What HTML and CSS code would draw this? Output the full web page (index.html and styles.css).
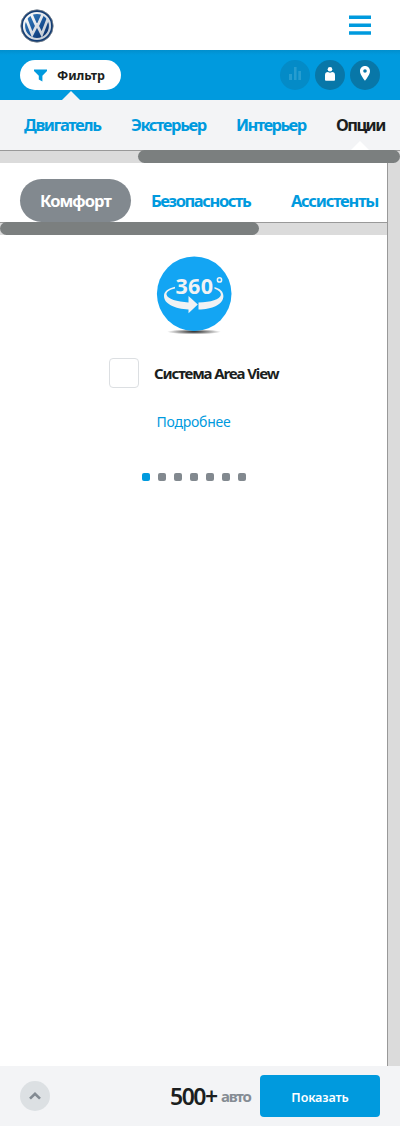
FILE: index.html
```html
<!DOCTYPE html>
<html lang="ru">
<head>
<meta charset="utf-8">
<title>Volkswagen</title>
<link rel="stylesheet" href="styles.css">
</head>
<body>
<header class="header">
  <svg class="logo" viewBox="0 0 34 34">
    <defs>
      <linearGradient id="blue" x1="0" y1="0" x2="1" y2="1"><stop offset="0" stop-color="#3a85c3"/><stop offset=".5" stop-color="#1b579b"/><stop offset="1" stop-color="#06245b"/></linearGradient>
      <linearGradient id="metal" x1="0" y1="0" x2="1" y2="1"><stop offset="0" stop-color="#fff"/><stop offset="1" stop-color="#bdc6d0"/></linearGradient>
    </defs>
    <circle cx="17" cy="17" r="16.2" fill="#123d75" stroke="#7b8188" stroke-width=".8"/>
    <circle cx="17" cy="17" r="13" fill="url(#blue)" stroke="url(#metal)" stroke-width="2.2"/>
    <path d="M11.4 5.6 15.7 15.4H18.3L22.6 5.6M6 9.6 12.2 25.5 16.1 17.6H17.9L21.8 25.5 28 9.6" fill="none" stroke="url(#metal)" stroke-width="2.7"/>
  </svg>
  <svg class="burger" viewBox="0 0 24 20"><path d="M1 2.3H23M1 10.3H23M1 18H23" stroke="#009ade" stroke-width="3.4"/></svg>
</header>
<div class="toolbar">
  <div class="filter">
    <svg class="funnel" viewBox="0 0 13 13"><path d="M0 .5H13V2L8.4 6.8V12.4L4.8 10.6V6.8L0 2Z" fill="#009ade"/></svg>
    <span class="filter-label">Фильтр</span>
  </div>
  <div class="actions">
    <svg class="round muted" viewBox="0 0 30 30"><path d="M9 14H12V20H9ZM14 7H16.6V20H14ZM18.3 11H21V20H18.3Z" fill="#269dd0"/></svg>
    <svg class="round" viewBox="0 0 30 30"><circle cx="15" cy="9.2" r="2.3" fill="#fff"/><path d="M10 20V15.2Q10 12 13 12Q15 13.6 17 12Q20 12 20 15.2V20Q20 20.8 19 20.8H11Q10 20.8 10 20Z" fill="#fff"/></svg>
    <svg class="round" viewBox="0 0 30 30"><path fill-rule="evenodd" d="M15 6.1C12 6.1 10 8.3 10 11.2C10 14.7 15 20.8 15 20.8S20 14.7 20 11.2C20 8.3 18 6.1 15 6.1ZM15 9.2A1.8 1.8 0 1 1 15 12.8A1.8 1.8 0 1 1 15 9.2Z" fill="#fff"/></svg>
  </div>
</div>
<nav class="tabs">
  <span class="tab engine">Двигатель</span>
  <span class="tab exterior">Экстерьер</span>
  <span class="tab interior">Интерьер</span>
  <span class="tab options">Опции</span>
</nav>
<div class="scrollbar main-scroll"><div class="thumb"></div></div>
<main class="content">
  <section class="panel">
    <nav class="groups">
      <span class="group comfort"><span>Комфорт</span></span>
      <span class="group safety">Безопасность</span>
      <span class="group assist">Ассистенты</span>
    </nav>
    <div class="scrollbar group-scroll"><div class="thumb"></div></div>
    <div class="option">
      <svg class="view360" viewBox="0 0 80 84">
        <defs><radialGradient id="shadow"><stop offset="0" stop-color="#222"/><stop offset="1" stop-color="#222" stop-opacity="0"/></radialGradient></defs>
        <ellipse cx="40" cy="78.8" rx="27" ry="2.6" fill="url(#shadow)"/>
        <circle cx="40.2" cy="40.8" r="37.3" fill="#13a5f3"/>
        <path d="M21 33.8C14 35.3 10 38.5 10 43C10 51 21 55.8 34.5 56.5V60.3L43.8 51.5L34.5 43V49.5C23 48.6 13.5 46.3 12.5 41.6C12.2 38.8 15.5 36.8 21 35.5ZM60.5 34C66 35.5 69.4 38.5 69.4 43C69.4 51.6 58 56.5 44.5 56.5V49.5C57 49.2 65.9 46.3 66.9 42C67.2 39 64 37 60.5 35.7Z" fill="#f1f2f3"/>
        <text class="degrees" x="21.5" y="41.3" textLength="37.5">360</text>
        <circle cx="65.5" cy="26.9" r="2.1" fill="none" stroke="#f1f2f3" stroke-width="1.5"/>
      </svg>
      <div class="choice"><span class="checkbox"></span><span class="option-name">Система Area View</span></div>
      <div class="more">Подробнее</div>
      <div class="dots"><i class="dot active"></i><i class="dot"></i><i class="dot"></i><i class="dot"></i><i class="dot"></i><i class="dot"></i><i class="dot"></i></div>
    </div>
  </section>
  <div class="side-scroll"></div>
</main>
<footer class="footer">
  <svg class="up" viewBox="0 0 30 30"><circle cx="15" cy="15" r="15" fill="#dce0e3"/><path d="M10 17.6 15 12.8 20 17.6" fill="none" stroke="#828a92" stroke-width="2.7"/></svg>
  <div class="total"><span class="count">500+</span><span class="cars">авто</span></div>
  <div class="show"><span>Показать</span></div>
</footer>
</body>
</html>
```
FILE: styles.css
```css
* { box-sizing: border-box; }
body { margin: 0; width: 400px; height: 1126px; display: flex; flex-direction: column; overflow: hidden; background: #fff; color: #1b1e20; font-family: "Noto Sans", sans-serif; white-space: nowrap; }
svg { display: block; flex: none; }
.header { height: 50px; display: flex; justify-content: space-between; align-items: center; padding: 1px 28px 0 20px; }
.logo { width: 34px; height: 34px; }
.burger { width: 24px; height: 20px; margin-top: -2px; }
.toolbar { height: 50px; display: flex; align-items: center; justify-content: space-between; padding: 0 20px; background: linear-gradient(#028fcd, #009ade 5px); }
.filter { position: relative; width: 101px; height: 30px; display: flex; align-items: center; padding-left: 14px; border-radius: 15px; background: #fff; }
.filter::after { content: ""; position: absolute; left: 42px; top: 31px; border: 9px solid transparent; border-top: 0; border-bottom-color: #f3f4f6; }
.funnel { width: 13px; height: 13px; }
.filter-label { margin-left: 10px; font-size: 12.5px; font-weight: 700; letter-spacing: -.1px; }
.actions { display: flex; gap: 5px; }
.round { width: 30px; height: 30px; border-radius: 50%; background: #0877a8; }
.muted { background: #048bc7; }
.tabs { position: relative; height: 50px; display: flex; align-items: center; gap: 30px; padding: 0 16px 2px 24px; background: #f3f4f6; }
.tabs::after { content: ""; position: absolute; left: 351px; bottom: 0; border: 9px solid transparent; border-top: 0; border-bottom-color: #fff; }
.tab, .group { flex: none; color: #009ade; font-size: 16.5px; font-weight: 700; letter-spacing: -1.4px; }
.engine { width: 77px; }
.exterior { width: 75px; }
.interior { width: 70px; }
.tab.options { width: 49px; color: #1b1e20; }
.tab.interior, .tab.options { letter-spacing: -1.55px; }
.scrollbar { height: 13px; flex: none; border-top: 1px solid #999; background: #dbdbdb; }
.thumb { height: 13px; margin-top: -1px; border-radius: 6.5px; background: #7b7f7f; }
.main-scroll .thumb { width: 262px; margin-left: 138px; }
.content { flex: 1; display: flex; }
.panel { width: 387px; }
.side-scroll { width: 13px; border-left: 1px solid #999; background: #dbdbdb; }
.groups { height: 59px; display: flex; align-items: center; padding: 16px 0 0 20px; }
.group.comfort { width: 111px; height: 43px; display: flex; align-items: center; padding: 0 0 1px 20px; border-radius: 21.5px; background: #82898f; color: #fff; letter-spacing: -.95px; }
.safety { width: 100px; margin-left: 20px; padding-bottom: 1px; }
.group.assist { margin-left: 40px; padding-bottom: 1px; letter-spacing: -1.2px; }
.group-scroll .thumb { width: 259px; }
.option { display: flex; flex-direction: column; align-items: center; padding-top: 18px; }
.view360 { width: 80px; height: 84px; }
.degrees { font-family: "Open Sans", sans-serif; font-size: 21.5px; font-weight: 700; fill: #f1f2f3; }
.choice { display: flex; align-items: center; width: 169px; margin-top: 21px; }
.checkbox { flex: none; width: 30px; height: 30px; border: 1px solid #dcdfe2; border-radius: 4px; }
.option-name { margin-left: 15px; font-size: 15px; font-weight: 700; letter-spacing: -1.13px; }
.more { margin-top: 24px; height: 20px; line-height: 20px; font-size: 14px; letter-spacing: -.25px; color: #009ade; }
.dots { display: flex; gap: 8px; margin-top: 41px; }
.dot { width: 8px; height: 8px; border-radius: 2px; background: #82898f; }
.active { background: #009ade; }
.footer { height: 60px; display: flex; align-items: center; padding: 0 20px; background: #f3f4f6; }
.up { width: 30px; height: 30px; }
.total { display: flex; align-items: center; margin-left: 120px; width: 90px; }
.count { width: 51px; font-size: 23px; font-weight: 600; letter-spacing: -1.5px; }
.cars { font-size: 15px; font-weight: 700; letter-spacing: -1.2px; color: #858c94; }
.show { width: 120px; height: 42px; margin-top: -1px; display: flex; align-items: center; justify-content: center; border-radius: 4px; background: #009ade; color: #fff; font-size: 12.5px; font-weight: 600; letter-spacing: -.1px; padding-top: 3px; }
```
